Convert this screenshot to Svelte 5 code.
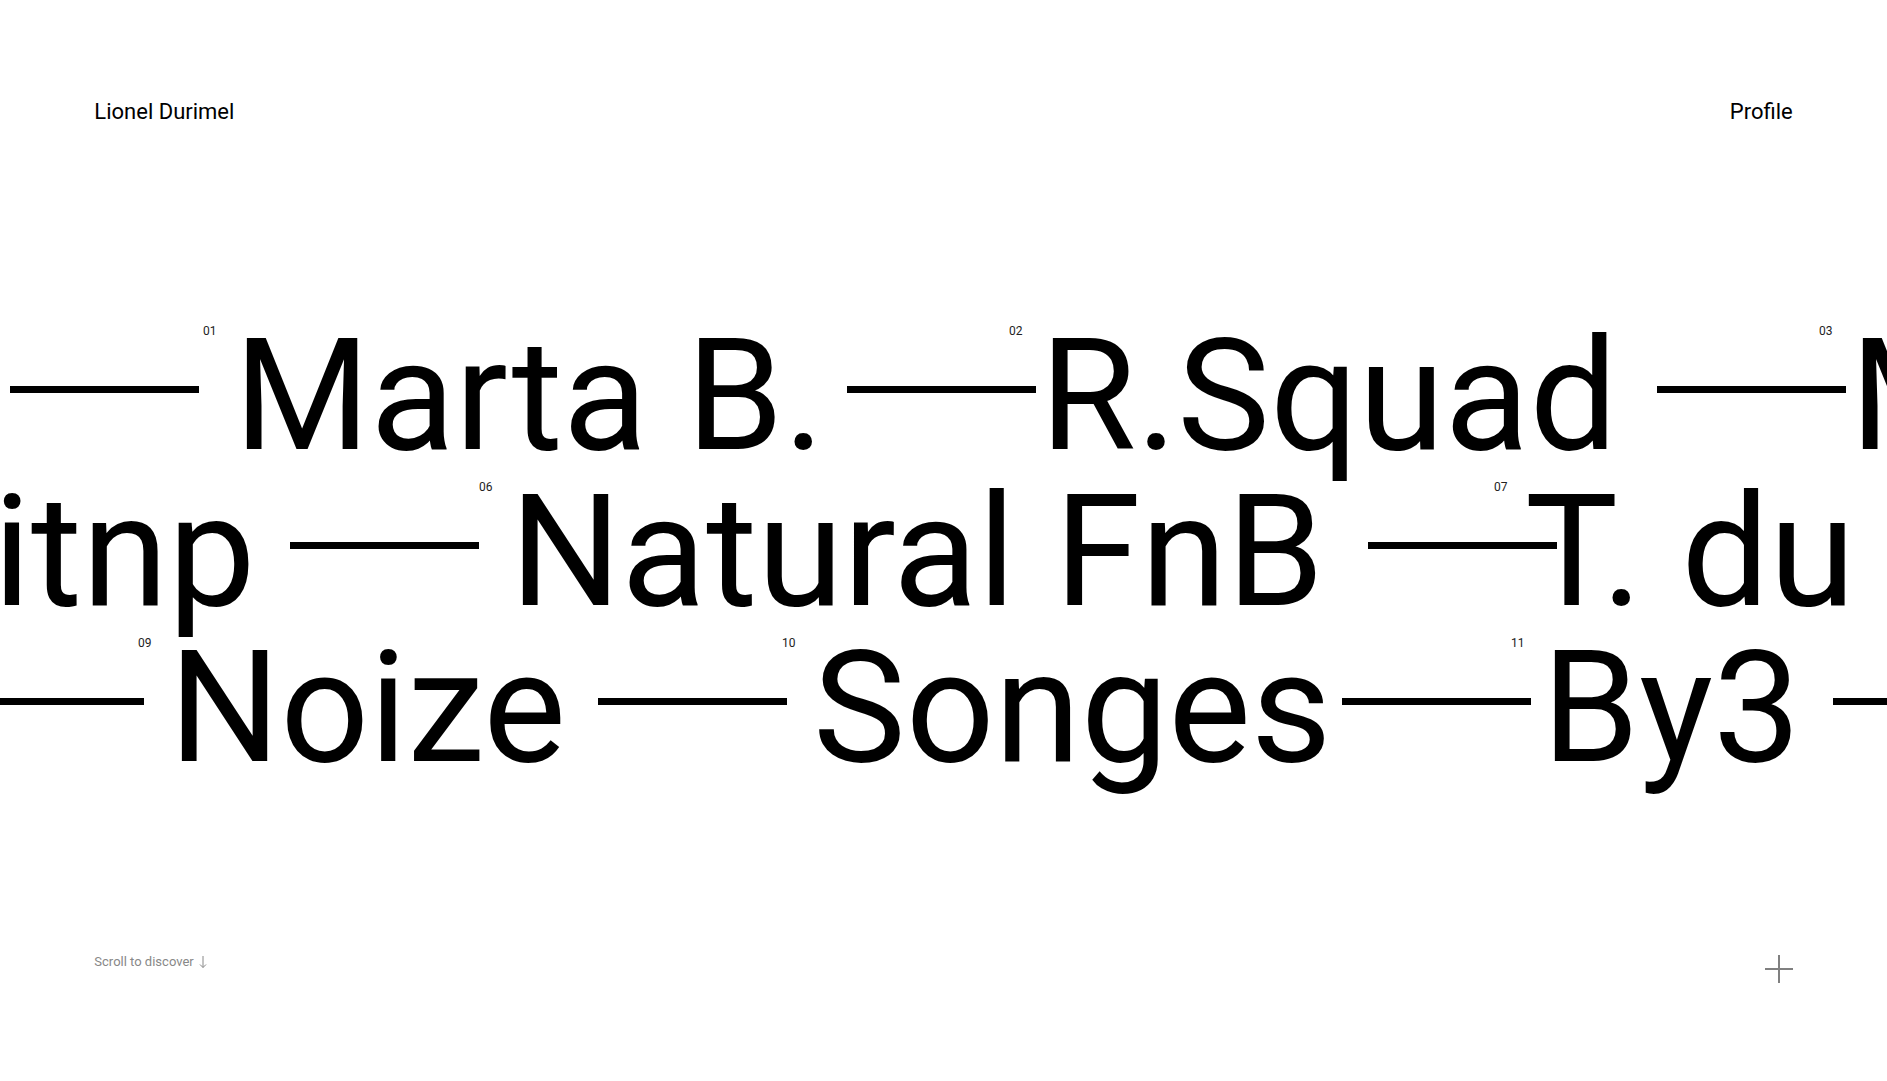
<script>
  // start: where the strip currently begins; width: room an item takes in its strip;
  // overlap: how far its dash runs under the next item.
  const strips = [
    {
      start: 10,
      items: [
        { width: 193, overlap: -4 },
        { no: '01', name: 'Marta B.', width: 806, overlap: 27 },
        { no: '02', name: 'R.Squad', width: 810, overlap: 27 },
        { no: '03', name: 'M', width: 600, overlap: 27 }
      ]
    },
    {
      start: -38,
      items: [
        { name: 'itnp', width: 517, overlap: 0 },
        { no: '06', name: 'Natural FnB', width: 1015, overlap: 63 },
        { no: '07', name: 'T. du', width: 640, overlap: 0 }
      ]
    },
    {
      start: -45,
      items: [
        { width: 183, overlap: 6 },
        { no: '09', name: 'Noize', width: 644, overlap: 5 },
        { no: '10', name: 'Songes', width: 729, overlap: 20 },
        { no: '11', name: 'By3', width: 491, overlap: 20 }
      ]
    }
  ];
</script>

<div class="page">
  <header>
    <a href="#home">Lionel Durimel</a>
    <a href="#profile">Profile</a>
  </header>

  <main>
    {#each strips as strip}
      <div class="strip" style:--start="{strip.start}px">
        {#each strip.items as item}
          <div class="item" style:--width="{item.width}px" style:--overlap="{item.overlap}px">
            {#if item.name}
              <a class="project" href="#project">
                {#if item.no}<span class="no">{item.no}</span>{/if}
                <span class="name">{item.name}</span>
              </a>
            {/if}
            <span class="dash"></span>
          </div>
        {/each}
      </div>
    {/each}
  </main>

  <footer>
    <p>
      Scroll to discover
      <svg width="8" height="12" viewBox="0 0 8 12" aria-hidden="true">
        <path d="M4 0V11.5M1 8.5L4 11.5L7 8.5" />
      </svg>
    </p>
    <button type="button" aria-label="Open index">
      <svg width="28" height="28" viewBox="0 0 28 28" aria-hidden="true">
        <path d="M14 0V28M0 14H28" />
      </svg>
    </button>
  </footer>
</div>

<style>
  :global(body) {
    background: #fff;
  }

  .page {
    box-sizing: border-box;
    min-height: 100vh;
    padding: 98px 0;
    display: flex;
    flex-direction: column;
    overflow: hidden;
    font-family: Roboto, 'Liberation Sans', sans-serif;
    color: #000;
  }

  a {
    color: inherit;
    text-decoration: none;
  }

  header,
  footer {
    display: flex;
    justify-content: space-between;
    align-items: flex-start;
    padding: 0 5%;
  }

  header {
    font-size: 22px;
    line-height: 28px;
  }

  main {
    flex: 1;
    display: flex;
    flex-direction: column;
    justify-content: center;
    padding-top: 22px;
  }

  .strip {
    display: flex;
    height: 156px;
    margin-left: var(--start);
  }

  .item {
    flex: none;
    width: var(--width);
    display: flex;
    align-items: flex-start;
  }

  .project {
    position: relative;
    padding-left: 31px;
    white-space: nowrap;
  }

  .no {
    position: absolute;
    top: 7px;
    left: 0;
    font-size: 12px;
    line-height: 12px;
    color: #222;
  }

  .name {
    display: block;
    font-size: 156px;
    line-height: 156px;
  }

  .dash {
    flex: none;
    width: 189px;
    height: 7px;
    margin: 68px calc(0px - var(--overlap)) 0 auto;
    background: #000;
  }

  footer {
    color: #888;
  }

  p {
    margin: 0;
    display: flex;
    align-items: center;
    gap: 5px;
    font-size: 13px;
    line-height: 14px;
  }

  svg {
    display: block;
    fill: none;
    stroke: #888;
    stroke-width: 1;
  }

  button {
    padding: 0;
    border: 0;
    background: none;
    cursor: pointer;
  }

  button svg {
    stroke: #808080;
    stroke-width: 2;
  }
</style>
